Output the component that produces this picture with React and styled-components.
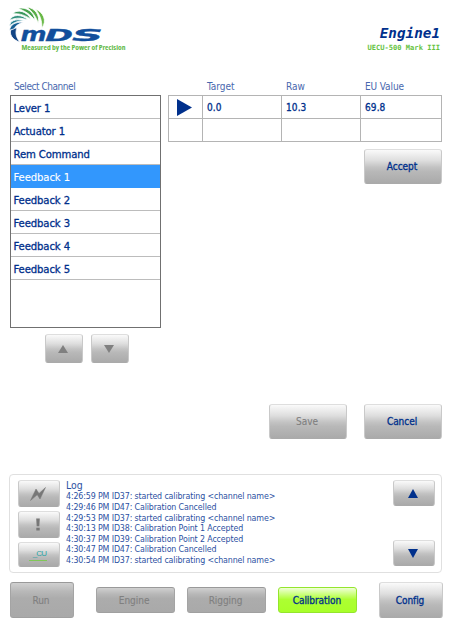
import React from "react";
import styled, { createGlobalStyle, css } from "styled-components";

const NAVY = "#00308c";
const SANS = '"DejaVu Sans Condensed", "DejaVu Sans", sans-serif';

const GlobalStyle = createGlobalStyle`
  * { box-sizing: border-box; }
  body { margin: 0; background: #fff; }
`;

const Screen = styled.main`
  display: flex;
  flex-direction: column;
  width: 450px;
  height: 620px;
  padding: 0 8px 0 10px;
  overflow: hidden;
  font-family: ${SANS};
  font-stretch: condensed;
  color: ${NAVY};
  white-space: nowrap;
`;

const Header = styled.header`
  display: flex;
  justify-content: space-between;
  height: 80px;
`;

const Logo = styled.svg`
  width: 120px;
  height: 56px;
  flex: none;
  overflow: visible;
`;

const EngineInfo = styled.div`
  padding: 25px 2px 0 0;
  text-align: right;
  font-family: "DejaVu Sans Mono", monospace;
  font-weight: bold;
`;

const EngineName = styled.div`
  font-size: 14.3px;
  line-height: 17px;
  font-style: italic;
`;

const EngineModel = styled.div`
  font-size: 7.1px;
  line-height: 11px;
  color: #66c33f;
`;

const Workspace = styled.section`
  display: flex;
  gap: 7px;
  height: 324px;
`;

const Channels = styled.div`
  width: 151px;
`;

const Caption = styled.div`
  height: 15px;
  padding-left: 4px;
  font-size: 10px;
  line-height: 14px;
  letter-spacing: ${(p) => p.$track ?? -0.45}px;
  color: #4868ae;
`;

const ChannelList = styled.ul`
  height: 233px;
  margin: 0;
  padding: 0;
  list-style: none;
  border: 1px solid #707070;
`;

const Channel = styled.li`
  height: 23px;
  padding-left: 2.5px;
  border-bottom: 1px solid #bcbcbc;
  font-size: 11.2px;
  line-height: 25px;
  letter-spacing: -0.1px;
  -webkit-text-stroke: 0.3px currentColor;
  ${(p) => p.$selected && css`
    background: #3297fd;
    border-color: #3297fd;
    color: #fff;
    -webkit-text-stroke-width: 0.1px;
  `}
`;

const Pager = styled.div`
  display: flex;
  gap: 8px;
  padding: 6px 0 0 35px;
`;

const faces = {
  normal: css`
    border-color: #dedede #c9c9c9 #aaa;
    background: linear-gradient(#fafafa 0%, #dedede 32%, #c3c3c3 52%, #b8b8b8 65%, #aaa 100%);
  `,
  disabled: css`
    border-color: #999 #a4a4a4 #a0a0a0;
    background: linear-gradient(#d0d0d0 0%, #b8b8b8 25%, #acacac 45%, #a9a9a9 100%);
  `,
  active: css`
    border-color: #94e52d;
    background: linear-gradient(#f0ffd8 0%, #c9ff77 28%, #adff32 48%, #a8ff29 100%);
  `,
};

const Button = styled.button`
  display: flex;
  align-items: center;
  justify-content: center;
  flex: none;
  width: ${(p) => p.$w}px;
  height: ${(p) => p.$h}px;
  padding: 0 2px 0 0;
  border: 1px solid;
  border-radius: 3px;
  font: 10px ${SANS};
  font-stretch: condensed;
  letter-spacing: -0.05px;
  color: ${(p) => (p.$muted ? "#808080" : NAVY)};
  -webkit-text-stroke: ${(p) => (p.$muted ? 0.1 : 0.3)}px currentColor;
  ${(p) => faces[p.$face || "normal"]}
`;

const Points = styled.div`
  width: 274px;
`;

const PointGrid = styled.div`
  display: grid;
  grid-template-columns: 34px 79px 79px 1fr;
`;

const Captions = styled(PointGrid)`
  height: 15px;
  padding-left: 1px;
`;

const PointTable = styled(PointGrid)`
  border: solid #b4b4b4;
  border-width: 1px 0 0 1px;
`;

const Cell = styled.div`
  display: flex;
  align-items: center;
  height: 23px;
  padding: 1px 0 0 ${(p) => (p.$marker ? 8 : 4)}px;
  border: solid #b4b4b4;
  border-width: 0 1px 1px 0;
  font-size: 10px;
  letter-spacing: 0.1px;
  -webkit-text-stroke: 0.3px currentColor;
`;

const AcceptBar = styled.div`
  display: flex;
  justify-content: flex-end;
  padding: 7px 0 0;
`;

const Actions = styled.div`
  display: flex;
  gap: 17px;
  justify-content: flex-end;
  height: 70px;
`;

const LogPanel = styled.section`
  display: flex;
  width: 433px;
  height: 99px;
  margin-left: -1px;
  padding: 5px 6px 0 8px;
  border: 1px solid #e0e0e0;
  border-radius: 4px;
`;

const SideButtons = styled.div`
  display: flex;
  flex-direction: column;
  gap: ${(p) => p.$gap}px;
`;

const LogBody = styled.div`
  flex: 1;
  padding-left: 6px;
  color: #2c51a2;
`;

const LogTitle = styled.h2`
  margin: -1px 0 0;
  font-size: 10.4px;
  font-weight: normal;
  line-height: 12px;
  height: 12.4px;
`;

const LogLine = styled.div`
  font-size: 8.8px;
  line-height: 10.6px;
  letter-spacing: -0.13px;
`;

const Tabs = styled.nav`
  display: flex;
  align-items: center;
  justify-content: space-between;
  width: 433px;
  height: 36px;
  margin-top: 9px;
`;

const TabGroup = styled.div`
  display: flex;
  gap: 12.4px;
`;

const Triangle = ({ w = 10, h = 9, color = NAVY, dir }) => {
  const points = {
    up: `0,${h} ${w / 2},0 ${w},${h}`,
    down: `0,0 ${w},0 ${w / 2},${h}`,
    right: `0,0 ${w},${h / 2} 0,${h}`,
  }[dir];
  return (
    <svg width={w} height={h}>
      <polygon points={points} fill={color} />
    </svg>
  );
};

const blades = [
  ["#124585", "M60 127 C36 119 27 102 33 88 L51 83 C45 98 48 112 60 127Z"],
  ["#175f93", "M29 91 C30 76 42 66 70 66 C55 72 46 78 43 86Z"],
  ["#1f7d8f", "M29 77 C31 64 42 55 74 62 C58 62 43 66 29 77Z"],
  ["#2c8c78", "M29 61 C36 42 66 42 84 60 C66 53 46 52 29 61Z"],
  ["#3a975c", "M38 41 C52 26 82 34 93 58 C76 46 60 40 38 41Z"],
  ["#48a24c", "M54 25 C80 20 102 36 105 61 C92 45 78 34 54 25Z"],
  ["#58ad47", "M80 21 C106 24 120 46 115 70 C108 50 98 35 80 21Z"],
  ["#68b845", "M106 27 C130 36 142 62 126 84 C126 62 120 44 106 27Z"],
];

const MdsLogo = () => (
  <Logo viewBox="10 0 120 56" role="img" aria-label="MDS">
    <g transform="scale(.3333)" stroke="#fff" strokeWidth="2.4">
      {blades.map(([fill, d]) => <path key={fill} fill={fill} d={d} />)}
    </g>
    <g
      fontFamily="DejaVu Sans"
      fontWeight="bold"
      fontStyle="italic"
      fill="#124f9c"
      stroke="#124f9c"
      strokeWidth=".3"
    >
      <text x="20.5" y="40.8" fontSize="20" textLength="26" lengthAdjust="spacingAndGlyphs">m</text>
      <text x="45" y="40.8" fontSize="15.5" textLength="28" lengthAdjust="spacingAndGlyphs">D</text>
      <text x="72" y="40.8" fontSize="15.2" textLength="31" lengthAdjust="spacingAndGlyphs">S</text>
    </g>
    <text
      x="21.5"
      y="50.3"
      textLength="104"
      lengthAdjust="spacingAndGlyphs"
      fontFamily="Open Sans"
      fontWeight="bold"
      fontSize="6.6"
      fill="#5fb946"
    >
      Measured by the Power of Precision
    </text>
  </Logo>
);

const BoltIcon = () => (
  <svg width="16" height="14" viewBox="0 0 16 14">
    <path d="M0.5 13.5 L6 2 L9 6.5 L15.5 0.5 L10 12 L7.2 7.8Z" fill="#777" stroke="#777" strokeWidth=".5" />
  </svg>
);

const AlertIcon = () => (
  <svg width="6" height="13" viewBox="0 0 6 13">
    <path d="M1.2 0.5 H4.8 L4.3 8.3 H1.7Z M1.3 9.8 H4.7 V12.6 H1.3Z" fill="#777" />
  </svg>
);

const UnitBadge = styled.span`
  margin-top: 1px;
  padding: 0 1px 2px 4px;
  border-bottom: 1px solid #80c857;
  font: 8px/9px "Liberation Sans Narrow", "Liberation Sans", sans-serif;
  letter-spacing: -0.8px;
  color: #2ba5a5;
  -webkit-text-stroke: 0;
`;

const channels = [
  "Lever 1", "Actuator 1", "Rem Command", "Feedback 1",
  "Feedback 2", "Feedback 3", "Feedback 4", "Feedback 5",
];

const log = [
  "4:26:59 PM ID37: started calibrating <channel name>",
  "4:29:46 PM ID47: Calibration Cancelled",
  "4:29:53 PM ID37: started calibrating <channel name>",
  "4:30:13 PM ID38: Calibration Point 1 Accepted",
  "4:30:37 PM ID39: Calibration Point 2 Accepted",
  "4:30:47 PM ID47: Calibration Cancelled",
  "4:30:54 PM ID37: started calibrating <channel name>",
];

export default function App() {
  return (
    <>
      <GlobalStyle />
      <Screen>
        <Header>
          <MdsLogo />
          <EngineInfo>
            <EngineName>Engine1</EngineName>
            <EngineModel>UECU-500 Mark III</EngineModel>
          </EngineInfo>
        </Header>

        <Workspace>
          <Channels>
            <Caption>Select Channel</Caption>
            <ChannelList>
              {channels.map((name) => (
                <Channel key={name} $selected={name === "Feedback 1"}>{name}</Channel>
              ))}
            </ChannelList>
            <Pager>
              <Button $w={38} $h={29} $muted><Triangle dir="up" color="#808080" h={8} /></Button>
              <Button $w={38} $h={29} $muted><Triangle dir="down" color="#808080" h={8} /></Button>
            </Pager>
          </Channels>

          <Points>
            <Captions>
              <span />
              <Caption $track={0}>Target</Caption>
              <Caption $track={0}>Raw</Caption>
              <Caption $track={-0.1}>EU Value</Caption>
            </Captions>
            <PointTable>
              <Cell $marker><Triangle dir="right" w={15} h={17} /></Cell>
              <Cell>0.0</Cell>
              <Cell>10.3</Cell>
              <Cell>69.8</Cell>
              <Cell />
              <Cell />
              <Cell />
              <Cell />
            </PointTable>
            <AcceptBar>
              <Button $w={78} $h={35}>Accept</Button>
            </AcceptBar>
          </Points>
        </Workspace>

        <Actions>
          <Button $w={78} $h={35} $muted>Save</Button>
          <Button $w={78} $h={35}>Cancel</Button>
        </Actions>

        <LogPanel>
          <SideButtons $gap={4}>
            <Button $w={42} $h={27}><BoltIcon /></Button>
            <Button $w={42} $h={27}><AlertIcon /></Button>
            <Button $w={42} $h={25}><UnitBadge>_CU</UnitBadge></Button>
          </SideButtons>
          <LogBody>
            <LogTitle>Log</LogTitle>
            {log.map((line) => <LogLine key={line}>{line}</LogLine>)}
          </LogBody>
          <SideButtons $gap={34}>
            <Button $w={42} $h={26}><Triangle dir="up" /></Button>
            <Button $w={42} $h={26}><Triangle dir="down" /></Button>
          </SideButtons>
        </LogPanel>

        <Tabs>
          <Button $w={64} $h={36} $muted $face="disabled">Run</Button>
          <TabGroup>
            <Button $w={79} $h={26} $muted $face="disabled">Engine</Button>
            <Button $w={79} $h={26} $muted $face="disabled">Rigging</Button>
            <Button $w={79} $h={26} $face="active">Calibration</Button>
          </TabGroup>
          <Button $w={64} $h={36}>Config</Button>
        </Tabs>
      </Screen>
    </>
  );
}
